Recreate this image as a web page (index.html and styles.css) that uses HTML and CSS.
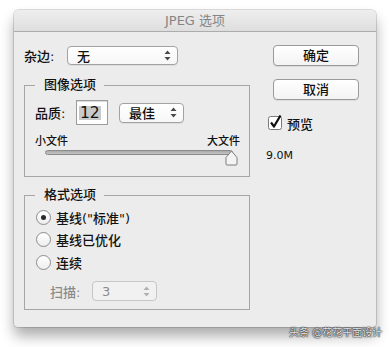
FILE: index.html
```html
<!DOCTYPE html>
<html>
<head>
<meta charset="utf-8">
<link rel="stylesheet" href="styles.css">
</head>
<body>
<div class="window">
  <div class="titlebar">JPEG 选项</div>
  <div class="content">
    <div class="left">
      <div class="row matte">
        <span class="lbl-matte">杂边:</span>
        <div class="select sel-matte"><span>无</span>
          <svg class="arrows" width="7" height="11" viewBox="0 0 7 11"><path d="M3.5 0.5 L6.5 4 L0.5 4 Z M3.5 10.5 L6.5 7 L0.5 7 Z" fill="#4a4a4a"/></svg>
        </div>
      </div>
      <fieldset class="group g1">
        <legend>图像选项</legend>
        <div class="row quality">
          <span class="lbl-q">品质:</span>
          <div class="input"><span class="selected">12</span></div>
          <div class="select sel-q"><span>最佳</span>
            <svg class="arrows" width="7" height="11" viewBox="0 0 7 11"><path d="M3.5 0.5 L6.5 4 L0.5 4 Z M3.5 10.5 L6.5 7 L0.5 7 Z" fill="#4a4a4a"/></svg>
          </div>
        </div>
        <div class="range-labels"><span>小文件</span><span>大文件</span></div>
        <div class="slider">
          <div class="track"></div>
          <svg class="thumb" width="13" height="16" viewBox="0 0 13 16"><path d="M6.5 1 L12 7.5 L12 14 Q12 15 11 15 L2 15 Q1 15 1 14 L1 7.5 Z" fill="#f4f4f4" stroke="#7d7d7d" stroke-width="1"/></svg>
        </div>
      </fieldset>
      <fieldset class="group g2">
        <legend>格式选项</legend>
        <div class="radio-row"><span class="radio checked"></span><span>基线("标准")</span></div>
        <div class="radio-row"><span class="radio"></span><span>基线已优化</span></div>
        <div class="radio-row"><span class="radio"></span><span>连续</span></div>
        <div class="row scan">
          <span class="lbl-scan">扫描:</span>
          <div class="select sel-scan disabled"><span>3</span>
            <svg class="arrows" width="7" height="11" viewBox="0 0 7 11"><path d="M3.5 0.5 L6.5 4 L0.5 4 Z M3.5 10.5 L6.5 7 L0.5 7 Z" fill="#b0b0b0"/></svg>
          </div>
        </div>
      </fieldset>
    </div>
    <div class="right">
      <div class="button b1">确定</div>
      <div class="button b2">取消</div>
      <div class="check-row">
        <svg class="checkbox" width="16" height="16" viewBox="0 0 16 16">
          <rect x="0.5" y="1.5" width="13" height="13" rx="2" fill="#fff" stroke="#7a7a7a"/>
          <path d="M3 7.5 L6 11.5 L12.5 0.5" fill="none" stroke="#111" stroke-width="2.2" stroke-linejoin="round"/>
        </svg>
        <span>预览</span>
      </div>
      <div class="size">9.0M</div>
    </div>
  </div>
</div>
<div class="watermark">头条 @花花平面设计</div>
</body>
</html>
```

FILE: styles.css
```css
html, body {
  margin: 0;
  padding: 0;
  background: #ffffff;
}
body {
  width: 389px;
  height: 347px;
  position: relative;
  overflow: hidden;
  font-family: "DejaVu Sans", "Noto Sans CJK SC", sans-serif;
  color: #111111;
}
.window {
  margin: 10px 0 0 14px;
  width: 362px;
  height: 317px;
  background: #ececec;
  border-radius: 5px 5px 4px 4px;
  box-shadow: 0 0 0 1px rgba(0,0,0,0.13), 0 9px 14px rgba(0,0,0,0.33);
  display: flex;
  flex-direction: column;
}
.titlebar {
  height: 21px;
  line-height: 21px;
  border-bottom: 1px solid #acacac;
  background: linear-gradient(#eeeeee, #dedede);
  border-radius: 5px 5px 0 0;
  text-align: center;
  font-size: 13px;
  color: #858585;
}
.content {
  display: flex;
  padding: 13px 0 0 10px;
  font-weight: 500;
}
.left {
  width: 226px;
  display: flex;
  flex-direction: column;
  padding-top: 1px;
}
.row {
  display: flex;
  align-items: center;
  font-size: 13px;
}
.matte {
  height: 19px;
}
.lbl-matte {
  width: 43px;
}
.select {
  box-sizing: border-box;
  position: relative;
  display: flex;
  align-items: center;
  border: 1px solid #a2a2a2;
  border-radius: 4px;
  background: linear-gradient(#ffffff, #f7f7f7);
  box-shadow: 0 1px 0 rgba(0,0,0,0.06);
  font-size: 13px;
  padding-left: 9px;
}
.select .arrows {
  position: absolute;
  right: 6px;
  top: 50%;
  margin-top: -5.5px;
}
.sel-matte {
  width: 111px;
  height: 19px;
}
.group {
  margin: 10px 0 0 0;
  padding: 0;
  border: 1px solid #a6a6a6;
  border-radius: 0;
  min-width: 0;
}
.group legend {
  margin-left: 10px;
  padding: 0 8px 0 9px;
  font-size: 13px;
  line-height: 20px;
}
.quality {
  height: 25px;
  margin-top: 5px;
  padding-left: 10px;
}
.lbl-q {
  width: 41px;
}
.input {
  box-sizing: border-box;
  width: 32px;
  height: 25px;
  border: 1px solid #9c9c9c;
  background: #fff;
  box-shadow: inset 0 1px 1px rgba(0,0,0,0.15);
  display: flex;
  align-items: center;
  padding-left: 2px;
}
.selected {
  background: #c9c9c9;
  font-size: 15.5px;
  font-weight: 400;
  line-height: 14px;
  height: 14px;
  padding: 0 1px;
}
.sel-q {
  margin-left: 11px;
  width: 65px;
  height: 20px;
}
.range-labels {
  display: flex;
  justify-content: space-between;
  padding: 0 9px 0 10px;
  margin-top: 10px;
  font-size: 11px;
  line-height: 13px;
}
.slider {
  position: relative;
  height: 16px;
  margin: 2px 0 10px 20px;
  width: 195px;
}
.track {
  margin-top: 2px;
  width: 188px;
  border: 1px solid #8c8c8c;
  border-radius: 3px;
  background: linear-gradient(#a9a9a9, #c4c4c4);
  box-sizing: border-box;
  height: 5px;
}
.thumb {
  position: absolute;
  left: 180px;
  top: 0;
}
.g2 {
  margin-top: 8px;
  padding-top: 1px;
  padding-bottom: 8px;
}
.radio-row {
  display: flex;
  align-items: center;
  height: 22.5px;
  padding-left: 11px;
  font-size: 13px;
}
.radio {
  box-sizing: border-box;
  width: 15px;
  height: 15px;
  border-radius: 50%;
  border: 1px solid #8c8c8c;
  background: linear-gradient(#ffffff, #eeeeee);
  margin-right: 5px;
  display: flex;
  align-items: center;
  justify-content: center;
}
.radio.checked::after {
  content: "";
  width: 5px;
  height: 5px;
  border-radius: 50%;
  background: #2a2a2a;
}
.scan {
  height: 20px;
  margin-top: 7.5px;
  padding-left: 25px;
}
.lbl-scan {
  width: 42px;
  color: #8a8a8a;
}
.sel-scan {
  width: 65px;
  height: 20px;
  border-color: #c6c6c6;
  color: #8a8a8a;
  background: #f1f1f1;
  box-shadow: none;
}
.right {
  margin-left: 16px;
  display: flex;
  flex-direction: column;
  align-items: flex-start;
}
.button {
  box-sizing: border-box;
  margin-left: 7px;
  width: 86px;
  height: 21px;
  border: 1px solid #9a9a9a;
  border-radius: 4px;
  background: linear-gradient(#ffffff, #f3f3f3);
  box-shadow: 0 1px 0 rgba(0,0,0,0.07);
  font-size: 13px;
  line-height: 19px;
  text-align: center;
}
.b2 {
  margin-top: 13px;
}
.check-row {
  display: flex;
  align-items: center;
  margin: 15px 0 0 2px;
  height: 16px;
  font-size: 13px;
}
.checkbox {
  margin-right: 3px;
}
.size {
  margin-top: 18px;
  font-size: 11px;
  font-weight: 400;
  line-height: 13px;
}
.watermark {
  position: absolute;
  left: 289px;
  top: 326px;
  font-size: 10px;
  line-height: 13px;
  color: #e6e6e6;
  text-shadow: 0 0 1px #222, 0 0 1px #222, 0 0 2px #444;
  white-space: nowrap;
}
```
